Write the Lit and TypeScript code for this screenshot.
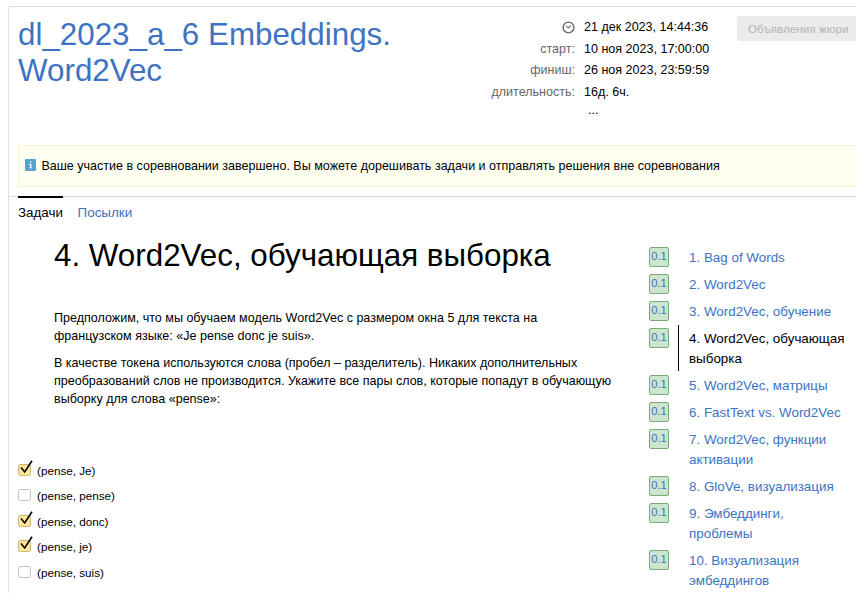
import { LitElement, html, css, svg } from "lit";
import { customElement } from "lit/decorators.js";
import { classMap } from "lit/directives/class-map.js";

const facts = [
  ["старт:", "10 ноя 2023, 17:00:00"],
  ["финиш:", "26 ноя 2023, 23:59:59"],
  ["длительность:", "16д. 6ч."],
];

const options = [
  { label: "(pense, Je)", on: true },
  { label: "(pense, pense)", on: false },
  { label: "(pense, donc)", on: true },
  { label: "(pense, je)", on: true },
  { label: "(pense, suis)", on: false },
];

const problems = [
  "1. Bag of Words",
  "2. Word2Vec",
  "3. Word2Vec, обучение",
  "4. Word2Vec, обучающая выборка",
  "5. Word2Vec, матрицы",
  "6. FastText vs. Word2Vec",
  "7. Word2Vec, функции активации",
  "8. GloVe, визуализация",
  "9. Эмбеддинги, проблемы",
  "10. Визуализация эмбеддингов",
];
const current = 3;

@customElement("app-root")
export class AppRoot extends LitElement {
  static styles = css`
    :host {
      display: block;
      box-sizing: border-box;
      height: 593px;
      padding: 6px 0 0 8px;
      overflow: hidden;
      background: #fff;
      color: #000;
      font: 12.54px/18px "Liberation Sans", Arial, sans-serif;
    }
    a { color: #3d73c2; text-decoration: none; }
    .page {
      height: 600px;
      border: 1px solid #e0e0e0;
      border-right: 0;
    }
    .head { display: flex; height: 138px; }
    h1 { margin: 0; font-weight: 400; }
    .contest {
      flex: none;
      width: 440px;
      padding: 10px 0 0 9px;
      font-size: 31.35px;
      line-height: 36px;
      box-sizing: border-box;
    }
    .facts {
      flex: none;
      display: grid;
      grid-template-columns: 126px 144px;
      grid-auto-rows: 21.5px;
      column-gap: 9px;
      align-content: start;
      line-height: 21.5px;
      padding-top: 10.2px;
      width: 288px;
      box-sizing: border-box;
    }
    .name { color: #666; text-align: right; }
    .clock { display: flex; justify-content: flex-end; align-items: center; }
    .more { grid-column: 2; padding-left: 4px; line-height: 14px; }
    .jury {
      width: 140px;
      height: 25px;
      margin: 9px 0 0;
      flex: none;
      border: 0;
      padding: 1px 0 0 11px;
      border-radius: 3px;
      background: #ebebeb;
      color: #b3b3b3;
      font: 11.7px/24px "Liberation Sans", Arial, sans-serif;
      text-align: left;
    }
    .notice {
      display: flex;
      align-items: center;
      height: 42px;
      box-sizing: border-box;
      margin-left: 9px;
      padding-left: 6px;
      border: 1px solid #fbf3cf;
      border-right: 0;
      background: #fffff0;
    }
    .info { margin-right: 5.4px; margin-top: -2px; }
    .tabs {
      display: flex;
      gap: 14.6px;
      margin-top: 9px;
      padding-left: 9px;
      border-top: 1px solid #d9d9d9;
      font-size: 13.4px;
      line-height: 18px;
    }
    .tab { padding-top: 7px; }
    .active { margin-top: -1px; padding-top: 6px; border-top: 2px solid #000; }
    .body { display: flex; }
    .main { flex: none; width: 630px; padding-left: 9px; box-sizing: border-box; }
    .text { padding-left: 36px; height: 235px; }
    .title { padding-top: 16px; font-size: 31.35px; line-height: 36px; }
    .text p { margin: 0 0 9px; width: 575px; }
    .title + p { margin-top: 35px; }
    .option {
      display: flex;
      align-items: center;
      gap: 4px;
      height: 25.5px;
      font-size: 11.7px;
    }
    .box { flex: none; margin-top: -3px; }
    .caption { padding-top: 2px; }
    .list { padding-top: 22.4px; font-size: 13.4px; line-height: 20px; }
    .problem { display: flex; margin-bottom: 1px; padding-left: 10px; }
    .score {
      flex: none;
      box-sizing: border-box;
      width: 20px;
      height: 20px;
      margin-top: 2.6px;
      border: 1px solid #7bab7b;
      border-radius: 2px;
      background: #cce5cc;
      color: #3d73c2;
      font-size: 11.1px;
      line-height: 17.6px;
      text-align: center;
    }
    .link {
      width: 160px;
      margin: 0 0 0 9px;
      padding: 3.6px 0 2.4px 10px;
      border-left: 1px solid transparent;
    }
    .current { color: #000; border-color: #000; }
  `;

  private checkbox(on: boolean) {
    return html`<svg class="box" width="15" height="17" viewBox="0 0 15 17">
      <rect x=".5" y="4.5" width="12" height="11" rx="1.8"
        fill=${on ? "#ffe698" : "#fff"} stroke=${on ? "#c9b67c" : "#c4c4c4"} />
      ${on
        ? svg`<path d="M3 7.6 6.7 12 14 .8" fill="none" stroke="#000" stroke-width="1.6" />`
        : ""}
    </svg>`;
  }

  render() {
    return html`<div class="page">
      <div class="head">
        <h1 class="contest"><a>dl_2023_a_6 Embeddings. Word2Vec</a></h1>
        <div class="facts">
          <span class="clock">
            <svg width="13" height="13" viewBox="0 0 13 13" fill="none" stroke="#666">
              <circle cx="6.5" cy="6.5" r="5.4" stroke-width="1.4" />
              <path d="M4.2 5.1 6.3 6.9 9 4.8" stroke-width="1.1" />
            </svg>
          </span>
          <span>21 дек 2023, 14:44:36</span>
          ${facts.map(([n, v]) => html`<span class="name">${n}</span><span>${v}</span>`)}
          <span class="more">...</span>
        </div>
        <button class="jury" disabled>Объявления жюри</button>
      </div>
      <div class="notice">
        <svg class="info" width="11" height="12" viewBox="0 0 11 12">
          <rect width="11" height="12" rx="1.3" fill="#56a3cd" />
          <path d="M5 2.2h1.4v1.4H5zM4 4.8h2.4v3.6h.9v.9H4v-.9h1V5.7H4z" fill="#fff" />
        </svg>
        <span>Ваше участие в соревновании завершено. Вы можете дорешивать задачи и отправлять решения вне соревнования</span>
      </div>
      <nav class="tabs">
        <span class="tab active">Задачи</span>
        <a class="tab">Посылки</a>
      </nav>
      <div class="body">
        <div class="main">
          <div class="text">
            <h1 class="title">4. Word2Vec, обучающая выборка</h1>
            <p>Предположим, что мы обучаем модель Word2Vec с размером окна 5 для текста на<br />французском языке: «Je pense donc je suis».</p>
            <p>В качестве токена используются слова (пробел – разделитель). Никаких дополнительных<br />преобразований слов не производится. Укажите все пары слов, которые попадут в обучающую<br />выборку для слова «pense»:</p>
          </div>
          ${options.map(
            (o) => html`<label class="option">${this.checkbox(o.on)}<span class="caption">${o.label}</span></label>`
          )}
        </div>
        <div class="list">
          ${problems.map(
            (p, i) => html`<div class="problem">
              <span class="score">0.1</span>
              <a class=${classMap({ link: true, current: i === current })}>${p}</a>
            </div>`
          )}
        </div>
      </div>
    </div>`;
  }
}
